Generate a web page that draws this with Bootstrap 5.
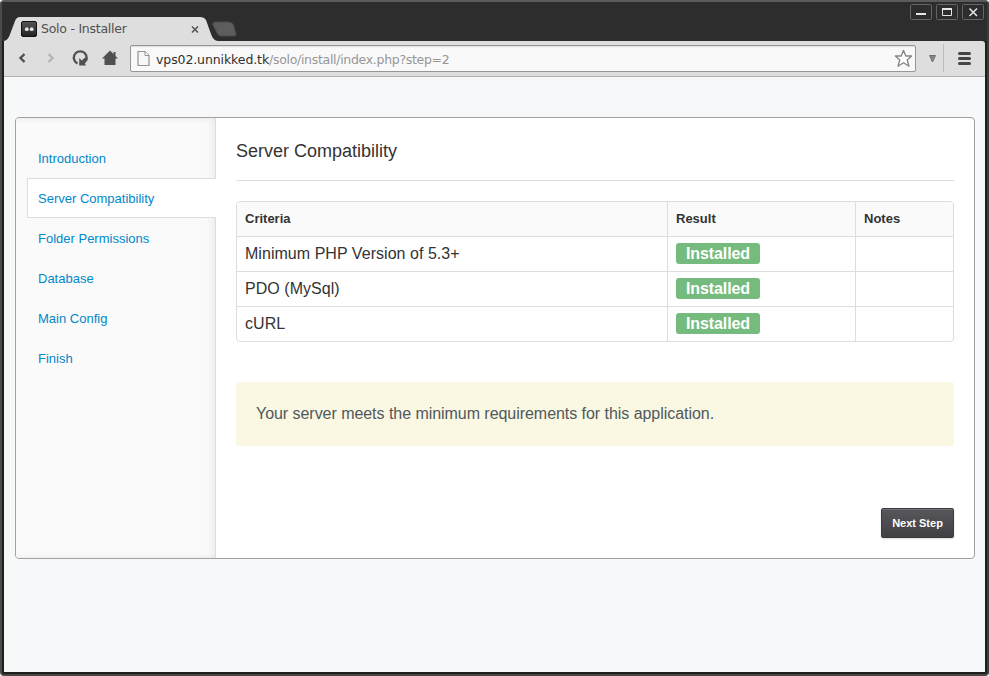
<!DOCTYPE html>
<html lang="en">
<head>
<meta charset="utf-8">
<title>Solo - Installer</title>
<link href="https://cdn.jsdelivr.net/npm/bootstrap@5.3.0/dist/css/bootstrap.min.css" rel="stylesheet">
<style>
body{font-family:"Liberation Sans",Arial,sans-serif;font-size:13px;line-height:20px;color:#333;background:#fff}
.window-frame{width:989px;height:676px;background:#2d2d2d;border:2px solid #4b4b49;border-top-color:#5b5b5b;border-right-color:#3c3c3c;border-bottom-color:#454745;border-radius:4px;padding:0 2px 2px}
.inner-edge{background:#1f1f1d}
.titlebar{height:39px;background:#2d2d2d;margin:0 -2px;position:relative}
.tab-shape{position:absolute;left:0;top:0}
.tab-content-row{position:relative;padding:15px 0 0 19px;width:198px;height:39px;font:12.500px/24px "DejaVu Sans",sans-serif;letter-spacing:-.25px;color:#505050}
.tab-title{padding-left:4px}
.win-btns{padding:2px 3px 0 0;gap:4px;position:relative}
.win-btns svg{display:block}
.toolbar{height:36px;background:#dedede;border-bottom:1px solid #b2b2b2;border-top-right-radius:3px}
.urlbox{width:786px;height:27px;margin:0 0 0 10px;background:#f9f9f9;border:1px solid #969696;border-radius:2px;box-shadow:inset 0 1px 1px #ddd;font:12.500px/25px "DejaVu Sans",sans-serif;letter-spacing:-.3px;color:#969696;padding:0 2px 0 6px}
.urlbox b{font-weight:400;color:#303030;letter-spacing:-.1px}
.url-text{padding:1px 0 0 6px}
.page-view{height:595px;background:#f7f8fa;padding:40px 10px 0 11px}
.installer{width:960px;height:442px;border:1px solid #a0a0a0;border-radius:4px;background:#fff;overflow:hidden}
.steps{width:200px;background:#fafafa;border-right:1px solid #ddd;box-shadow:inset -7px 0 9px -6px #e5e5e5,inset 0 7px 9px -9px #ddd,inset 0 -7px 9px -9px #ddd;padding:20px 0 0 11px}
.steps .nav-link{height:40px;padding:10px 10px;border:1px solid transparent;border-radius:0;color:#08c;line-height:20px}
.steps .nav-link.active{background:#fff;border-color:#ddd;border-right:0;margin-right:-1px}
.main-pane{padding:20px 20px}
.main-pane h1{font-size:18px;line-height:26px;font-weight:400;margin:0;padding-bottom:16px;border-bottom:1px solid #ddd}
.criteria{border:1px solid #ddd;border-radius:4px;margin-top:20px;overflow:hidden}
.criteria table{border-collapse:separate;border-spacing:0;table-layout:fixed;font-size:16px;color:#333;--bs-table-color:#333}
.criteria th,.criteria td{height:35px;padding:0 8px!important;vertical-align:middle;border-top:1px solid #ddd;border-bottom:0;border-left:1px solid #ddd;line-height:20px}
.criteria td{letter-spacing:.04px}
.criteria th:first-child,.criteria td:first-child{border-left:0}
.criteria th{height:34px;border-top:0;font-size:13px;background:#fafafa!important}
.installed{display:block;width:84px;height:21px;margin-bottom:1px;border-radius:3px;font-size:16px;line-height:21px;letter-spacing:-.1px;padding:0;background:#76bb7e;color:#fff}
.notice{height:64px;margin:40px 0 0;padding:0 20px;background:#faf7e3;border:0;border-radius:3px;color:#4f595c;font-size:16px;line-height:63px;letter-spacing:-.045px}
.next-btn{width:73px;height:30px;margin-top:62px;padding:0;border:1px solid #3b3a3e;border-radius:2px;background:linear-gradient(#58575c,#403f44);box-shadow:inset 0 1px #717075,0 1px 2px #ddd;color:#fff;font-size:11px;font-weight:700;line-height:28px}
</style>
<script src="https://cdn.jsdelivr.net/npm/bootstrap@5.3.0/dist/js/bootstrap.bundle.min.js"></script>
</head>
<body class="overflow-hidden">
<div class="window-frame inner-edge">
  <header class="titlebar d-flex justify-content-between">
    <svg class="tab-shape" width="240" height="39" aria-hidden="true">
      <path d="M2 39C6 38 7 35 8.500 31L13 19Q14.500 15 18 15H198Q202 15 204 18L209 32Q211 38.500 216 39Z" fill="#dedede"/>
      <path d="M214 20H226Q230 20 231.500 23L234 32Q234.500 34 232 34H219Q216 34 214.500 30L211 23Q210 20 214 20Z" fill="#5d5d5d" stroke="#4b4b4b"/>
    </svg>
    <div class="tab-content-row d-flex align-items-center">
      <svg width="16" height="16" class="flex-shrink-0"><defs><linearGradient id="fav" x2="0" y2="1"><stop stop-color="#555"/><stop offset="1" stop-color="#222"/></linearGradient></defs><rect x=".5" y=".5" width="15" height="15" rx="1.500" fill="url(#fav)" stroke="#111"/><circle cx="5.800" cy="8.200" r="1.900" fill="#e4e4e4"/><circle cx="10.700" cy="8.200" r="1.900" fill="#e4e4e4"/></svg>
      <span class="tab-title flex-grow-1 text-nowrap">Solo - Installer</span>
      <svg width="10" height="10"><path d="M2 2.500L8 8.500M8 2.500L2 8.500" stroke="#555" stroke-width="1.600"/></svg>
    </div>
    <div class="win-btns d-flex">
      <svg width="22" height="16"><rect x=".5" y=".5" width="21" height="15" rx="1" fill="none" stroke="#656565"/><path d="M6 10H16" stroke="#e6e6e6" stroke-width="2"/></svg>
      <svg width="22" height="16"><rect x=".5" y=".5" width="21" height="15" rx="1" fill="none" stroke="#656565"/><path d="M6.500 4.500H15.500V11.500H6.500Z" fill="none" stroke="#e6e6e6"/><path d="M6 5H16" stroke="#e6e6e6" stroke-width="2"/></svg>
      <svg width="22" height="16"><rect x=".5" y=".5" width="21" height="15" rx="1" fill="none" stroke="#656565"/><path d="M7.500 4.500L15 12M15 4.500L7.500 12" stroke="#e6e6e6" stroke-width="1.500"/></svg>
    </div>
  </header>
  <nav class="toolbar d-flex align-items-center">
    <svg width="116" height="35" class="flex-shrink-0">
      <path d="M20.500 13L16.500 17L20.500 21" fill="none" stroke="#505050" stroke-width="2.400"/>
      <path d="M44.500 13L48.500 17L44.500 21" fill="none" stroke="#b4b4b4" stroke-width="2.400"/>
      <path d="M73.500 22.500A6.400 6.400 0 1 1 82.200 19" fill="none" stroke="#505050" stroke-width="2.300"/>
      <path d="M75.200 17V24.500H82.200L80.800 22.800L83.800 18.500L81 16.500L77.800 19.500Z" fill="#505050"/>
      <path d="M106 9.500L98 17.500H100.500V24H111.500V17.500H114L111.500 15V11H109.500V13Z" fill="#505050"/>
    </svg>
    <div class="urlbox d-flex align-items-center flex-shrink-0">
      <svg width="13" height="17"><path d="M1 1.500H8L12 5.500V15.500H1Z" fill="#f7f7f7" stroke="#929292" stroke-width="1.200"/><path d="M8 1.500V5.500H12" fill="#fff" stroke="#929292"/></svg>
      <span class="url-text flex-grow-1"><b>vps02.unnikked.tk</b>/solo/install/index.php?step=2</span>
      <svg width="19" height="19"><path d="M9.500 1.300L11.800 7H17.600L13.200 11L15 17.200L9.500 13.700L4 17.200L5.800 11L1.400 7H7.200Z" fill="#fff" stroke="#858585" stroke-width="1.300" stroke-linejoin="round"/></svg>
    </div>
    <svg width="66" height="35" class="flex-shrink-0">
      <path d="M13.500 14.500H19.500L16.500 21Z" fill="#858585" stroke="#707070"/>
      <path d="M27.500 3V31" stroke="#bcbcbc"/>
      <path d="M43.500 12.500H53.500M43.500 17.500H53.500M43.500 22.500H53.500" stroke="#434643" stroke-width="3" stroke-linecap="round"/>
    </svg>
  </nav>
  <main class="page-view">
    <div class="installer d-flex">
      <aside class="steps flex-shrink-0">
        <nav class="nav flex-column">
          <a class="nav-link" href="#">Introduction</a>
          <a class="nav-link active" href="#">Server Compatibility</a>
          <a class="nav-link" href="#">Folder Permissions</a>
          <a class="nav-link" href="#">Database</a>
          <a class="nav-link" href="#">Main Config</a>
          <a class="nav-link" href="#">Finish</a>
        </nav>
      </aside>
      <section class="main-pane flex-grow-1">
        <h1>Server Compatibility</h1>
        <div class="criteria">
          <table class="table mb-0">
            <colgroup><col width="430"><col width="188"><col></colgroup>
            <thead><tr><th>Criteria</th><th>Result</th><th>Notes</th></tr></thead>
            <tbody>
              <tr><td>Minimum PHP Version of 5.3+</td><td><span class="badge installed">Installed</span></td><td></td></tr>
              <tr><td>PDO (MySql)</td><td><span class="badge installed">Installed</span></td><td></td></tr>
              <tr><td>cURL</td><td><span class="badge installed">Installed</span></td><td></td></tr>
            </tbody>
          </table>
        </div>
        <div class="alert notice">Your server meets the minimum requirements for this application.</div>
        <div class="d-flex justify-content-end"><button class="btn next-btn" type="button">Next Step</button></div>
      </section>
    </div>
  </main>
</div>
</body>
</html>
